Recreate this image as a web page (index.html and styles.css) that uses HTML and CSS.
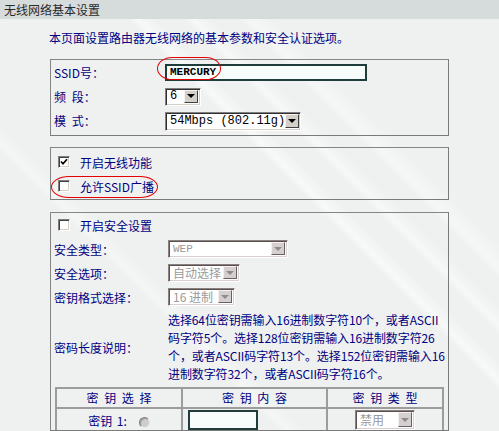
FILE: index.html
```html
<!DOCTYPE html>
<html lang="zh-CN">
<head>
<meta charset="utf-8">
<title>无线网络基本设置</title>
<link rel="stylesheet" href="styles.css">
</head>
<body>
<div class="titlebar">无线网络基本设置</div>
<div class="page">
  <p class="intro">本页面设置路由器无线网络的基本参数和安全认证选项。</p>

  <div class="box box1">
    <div class="row">
      <span class="lbl">SSID号：</span>
      <span class="field">
        <span class="tinput ssid">MERCURY</span>
        <span class="mark mark-ssid"></span>
      </span>
    </div>
    <div class="row">
      <span class="lbl">频 段：</span>
      <span class="sel sel-ch"><span class="v mono">6</span><span class="b"></span></span>
    </div>
    <div class="row">
      <span class="lbl">模 式：</span>
      <span class="sel sel-mode"><span class="v mono">54Mbps (802.11g)</span><span class="b"></span></span>
    </div>
  </div>

  <div class="box box2">
    <div class="row check">
      <span class="cb"><svg width="8" height="8" viewBox="0 0 8 8"><path d="M1 3.5 L3 5.8 L7 1.2" fill="none" stroke="#000" stroke-width="1.7"/></svg></span>
      <span class="ctext">开启无线功能</span>
    </div>
    <div class="row check">
      <span class="cb"></span>
      <span class="ctext">允许SSID广播</span>
      <span class="mark mark-bc"></span>
    </div>
  </div>

  <div class="box box3">
    <div class="row check">
      <span class="cb"></span>
      <span class="ctext">开启安全设置</span>
    </div>
    <div class="row">
      <span class="lbl wide">安全类型：</span>
      <span class="sel dis sel-wep"><span class="v mono">WEP</span><span class="b"></span></span>
    </div>
    <div class="row">
      <span class="lbl wide">安全选项：</span>
      <span class="sel dis sel-auto"><span class="v">自动选择</span><span class="b"></span></span>
    </div>
    <div class="row">
      <span class="lbl wide">密钥格式选择：</span>
      <span class="sel dis sel-hex"><span class="v">16 进制</span><span class="b"></span></span>
    </div>
    <div class="row desc">
      <span class="lbl wide">密码长度说明：</span>
      <p class="desctext">选择64位密钥需输入16进制数字符10个，或者ASCII<br>码字符5个。选择128位密钥需输入16进制数字符26<br>个，或者ASCII码字符13个。选择152位密钥需输入16<br>进制数字符32个，或者ASCII码字符16个。</p>
    </div>
    <table class="keys">
      <tr class="head">
        <td class="c1">密 钥 选 择</td>
        <td class="c2">密 钥 内 容</td>
        <td class="c3">密 钥 类 型</td>
      </tr>
      <tr class="krow">
        <td class="c1"><span class="kname">密钥 1:</span><span class="radio"></span></td>
        <td class="c2 left"><span class="tinput key"></span></td>
        <td class="c3"><span class="sel dis sel-type"><span class="v">禁用</span><span class="b"></span></span></td>
      </tr>
    </table>
  </div>
</div>
</body>
</html>
```

FILE: styles.css
```css
html, body {
  margin: 0;
  padding: 0;
}
body {
  width: 499px;
  height: 431px;
  overflow: hidden;
  font-family: "Noto Sans CJK SC", "Liberation Sans", sans-serif;
  font-size: 12px;
  color: #000080;
  background-color: #eff1f1;
  background-image:
    linear-gradient(45deg, transparent 58%, rgba(255,255,255,0.55) 59%, transparent 61%),
    linear-gradient(45deg, transparent 64%, rgba(255,255,255,0.45) 65%, transparent 67%),
    linear-gradient(45deg, transparent 70%, rgba(255,255,255,0.4) 71%, transparent 74%),
    linear-gradient(45deg, transparent 30%, rgba(255,255,255,0.35) 31%, transparent 33%);
}
.titlebar {
  height: 19px;
  line-height: 19px;
  padding-left: 4px;
  background: #d6dbdb;
  color: #2a2a2a;
  font-size: 12px;
}
.page {
  padding: 10px 0 0 50px;
}
.intro {
  margin: 0 0 12px -1px;
  line-height: 18px;
  color: #000080;
}
.box {
  width: 399px;
  box-sizing: border-box;
  border: 1px solid #858585;
  border-right-color: #7a7a7a;
  border-bottom-color: #7a7a7a;
  padding: 0 3px;
}
.box1 { padding-bottom: 3px; margin-bottom: 11px; }
.box2 { padding-top: 2px; padding-bottom: 1px; margin-bottom: 12px; }
.box3 { height: 219px; overflow: hidden; }
.row {
  position: relative;
  display: flex;
  align-items: center;
  height: 24px;
}
.lbl {
  width: 111px;
  flex: none;
  word-spacing: 3px;
  white-space: pre;
}
.lbl.wide { width: 114px; }
.field { position: relative; display: inline-flex; }
.tinput {
  display: inline-block;
  box-sizing: border-box;
  border: 2px solid #1e3d3b;
  background: #f7fdfb;
  color: #000;
}
.ssid {
  width: 202px;
  height: 17px;
  line-height: 13px;
  padding-left: 3px;
  font-family: "Liberation Mono", monospace;
  font-weight: bold;
  font-size: 11px;
}
.key {
  width: 70px;
  height: 20px;
}
.mark {
  position: absolute;
  border: 1px solid #e60000;
  pointer-events: none;
}
.mark-ssid {
  left: -8px;
  top: -7px;
  width: 64px;
  height: 23px;
  box-sizing: border-box;
  border-radius: 16px / 12px;
}
.mark-bc {
  left: -3px;
  top: 2px;
  width: 107px;
  height: 22px;
  box-sizing: border-box;
  border-radius: 18px / 11px;
}
.sel {
  display: inline-flex;
  align-items: stretch;
  box-sizing: border-box;
  border: 1px solid;
  border-color: #808080 #ffffff #ffffff #808080;
  box-shadow: inset 1px 1px 0 #303030, inset -1px -1px 0 #d4d0c8;
  background: #fff;
  padding: 1px 2px 2px 2px;
  color: #000;
}
.sel .v {
  flex: 1;
  display: flex;
  align-items: center;
  padding-left: 2px;
  white-space: pre;
}
.mono { font-family: "Liberation Mono", monospace; }
.sel .b {
  position: relative;
  width: 14px;
  flex: none;
  box-sizing: border-box;
  background: #d4d0c8;
  border: 1px solid;
  border-color: #f4f4f4 #404040 #404040 #f4f4f4;
}
.sel .b::after {
  content: "";
  position: absolute;
  left: 50%;
  top: 50%;
  margin-left: -4px;
  margin-top: -2px;
  border-left: 4px solid transparent;
  border-right: 4px solid transparent;
  border-top: 4px solid #000;
}
.sel.dis { color: #9a9a9a; border-color: #8a8080 #ffffff #ffffff #8a8080; box-shadow: inset 1px 1px 0 #5a5050, inset -1px -1px 0 #d8d0d0; }
.sel.dis .b { background: #d6cfcf; border-color: #f4f0f0 #6a6060 #6a6060 #f4f0f0; }
.sel.dis .b::after { border-top-color: #8c8c8c; }
.sel-ch { width: 36px; height: 18px; margin-top: 1px; }
.sel-mode { width: 136px; height: 19px; margin-top: 2px; }
.sel-wep { width: 120px; height: 18px; }
.sel-wep .v { font-size: 11px; }
.sel-auto { width: 72px; height: 18px; }
.sel-hex { width: 67px; height: 18px; }
.sel-type { width: 60px; height: 20px; }
.check { padding-left: 4px; }
.cb {
  width: 12px;
  height: 12px;
  flex: none;
  box-sizing: border-box;
  border: 1px solid;
  border-color: #808080 #ffffff #ffffff #808080;
  box-shadow: inset 1px 1px 0 #404040, inset -1px -1px 0 #d4d0c8;
  background: #fff;
  display: flex;
  align-items: center;
  justify-content: center;
}
.cb svg { display: block; }
.ctext { margin-left: 10px; }
.row.desc {
  height: auto;
  padding: 2px 0;
}
.desctext {
  margin: 0;
  line-height: 18px;
  letter-spacing: -0.1px;
  white-space: nowrap;
}
.keys {
  margin: 2px 1px 0;
  width: 389px;
  border-collapse: collapse;
}
.keys td {
  border: 2px solid #9c9c9c;
  text-align: center;
  padding: 0;
  word-spacing: 3px;
  white-space: pre;
}
.keys .head td { height: 18px; line-height: 18px; }
.keys .krow td { height: 22px; }
.keys .c1 { width: 124px; }
.keys .c2 { width: 138px; }
.keys .left { text-align: left; padding-left: 5px; }
.keys .tinput, .keys .sel { vertical-align: middle; }
.kname { word-spacing: 2px; }
.radio {
  display: inline-block;
  vertical-align: middle;
  width: 11px;
  height: 11px;
  margin-left: 12px;
  box-sizing: border-box;
  border-radius: 50%;
  border: 1px solid;
  border-color: #808080 #e8e8e8 #e8e8e8 #808080;
  background: #cfcccc;
  box-shadow: inset 1px 1px 0 #9a9898;
}
```
